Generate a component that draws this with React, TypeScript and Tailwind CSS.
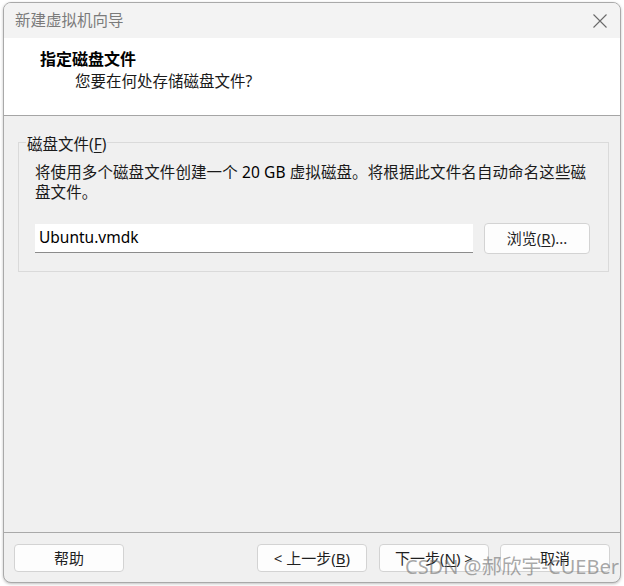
import React from "react";

const FONT = '"Segoe UI", "Noto Sans", "Noto Sans CJK SC", sans-serif';

function Btn({ children, className = "" }: { children: React.ReactNode; className?: string }) {
  return (
    <div
      className={
        "h-[28px] w-[110px] flex items-center justify-center rounded-[4px] border border-[#d3d3d3] bg-[#fdfdfd] text-[15px] text-[#1f1f1f] leading-none " +
        className
      }
    >
      {children}
    </div>
  );
}

export default function App() {
  return (
    <div
      className="relative w-[624px] h-[586px] bg-white pt-[2px] pl-[3px] pr-[3px] pb-[3px]"
      style={{ fontFamily: FONT }}
    >
      <div className="flex h-[581px] w-[618px] flex-col overflow-hidden rounded-[8px] border border-[#a9a9a9] bg-[#f0f0f0] shadow-[0_1px_3px_rgba(0,0,0,0.25)]">
        {/* Title bar */}
        <div className="flex h-[35px] shrink-0 items-center justify-between bg-[#f3f3f3] pl-[11px] pr-[12px]">
          <span className="text-[15.5px] text-[#7b7b7b]">新建虚拟机向导</span>
          <svg width="16" height="16" viewBox="0 0 16 16" className="mt-[1px]">
            <path d="M1.5 1.5 L14.5 14.5 M14.5 1.5 L1.5 14.5" stroke="#6a6a6a" strokeWidth="1.1" fill="none" />
          </svg>
        </div>
        {/* Header */}
        <div className="h-[78px] shrink-0 border-b border-[#a5a5a5] bg-white pl-[36px] pt-[11px]">
          <div className="text-[16px] font-bold leading-[20px] text-black">指定磁盘文件</div>
          <div className="mt-[2px] pl-[35px] text-[15.5px] leading-[20px] text-[#1a1a1a]">您要在何处存储磁盘文件?</div>
        </div>
        {/* Body */}
        <div className="flex-1 pl-[14px] pr-[11px] pt-[14px]">
          <fieldset className="m-0 border border-[#dadada] p-0">
            <legend className="ml-[7px] px-[1px] pt-[4px] text-[15.5px] leading-[20px] text-[#1a1a1a]">
              磁盘文件(<span className="underline underline-offset-2">F</span>)
            </legend>
            <div className="pl-[16px] pr-[18px] pb-[17px] pt-[8px]">
              <div className="whitespace-nowrap text-[15.5px] leading-[20px] tracking-[0.1px] text-[#1a1a1a]">
                将使用多个磁盘文件创建一个 <span className="text-black">20 GB</span> 虚拟磁盘。将根据此文件名自动命名这些磁
                <br />
                盘文件。
              </div>
              <div className="mt-[21px] flex items-center gap-[11px]">
                <div className="flex h-[29px] w-[438px] items-center border-b border-[#8c8c8c] bg-white pl-[4px] text-[15.5px] text-black">
                  Ubuntu.vmdk
                </div>
                <div className="flex h-[31px] w-[106px] items-center justify-center rounded-[4px] border border-[#d3d3d3] bg-[#fdfdfd] text-[15px] text-[#1f1f1f]">
                  浏览(<span className="underline underline-offset-2">R</span>)...
                </div>
              </div>
            </div>
          </fieldset>
        </div>
        {/* Footer */}
        <div className="flex h-[50px] shrink-0 items-start border-t border-[#a9a9a9] pl-[10px] pr-[10px] pt-[11px]">
          <Btn>帮助</Btn>
          <div className="flex-1" />
          <Btn>&lt; 上一步(<span className="underline underline-offset-2">B</span>)</Btn>
          <Btn className="ml-[12px]">
            下一步(<span className="underline underline-offset-2">N</span>) &gt;
          </Btn>
          <Btn className="ml-[11px]">取消</Btn>
        </div>
      </div>
      {/* Watermark */}
      <div
        className="pointer-events-none absolute left-[405px] top-[555px] whitespace-nowrap text-[20px] leading-[24px] text-[rgba(110,110,110,0.6)]"
        style={{ fontFamily: '"Noto Sans", "Noto Sans CJK SC", sans-serif' }}
      >
        CSDN @郝欣宇-CUEBer
      </div>
    </div>
  );
}
